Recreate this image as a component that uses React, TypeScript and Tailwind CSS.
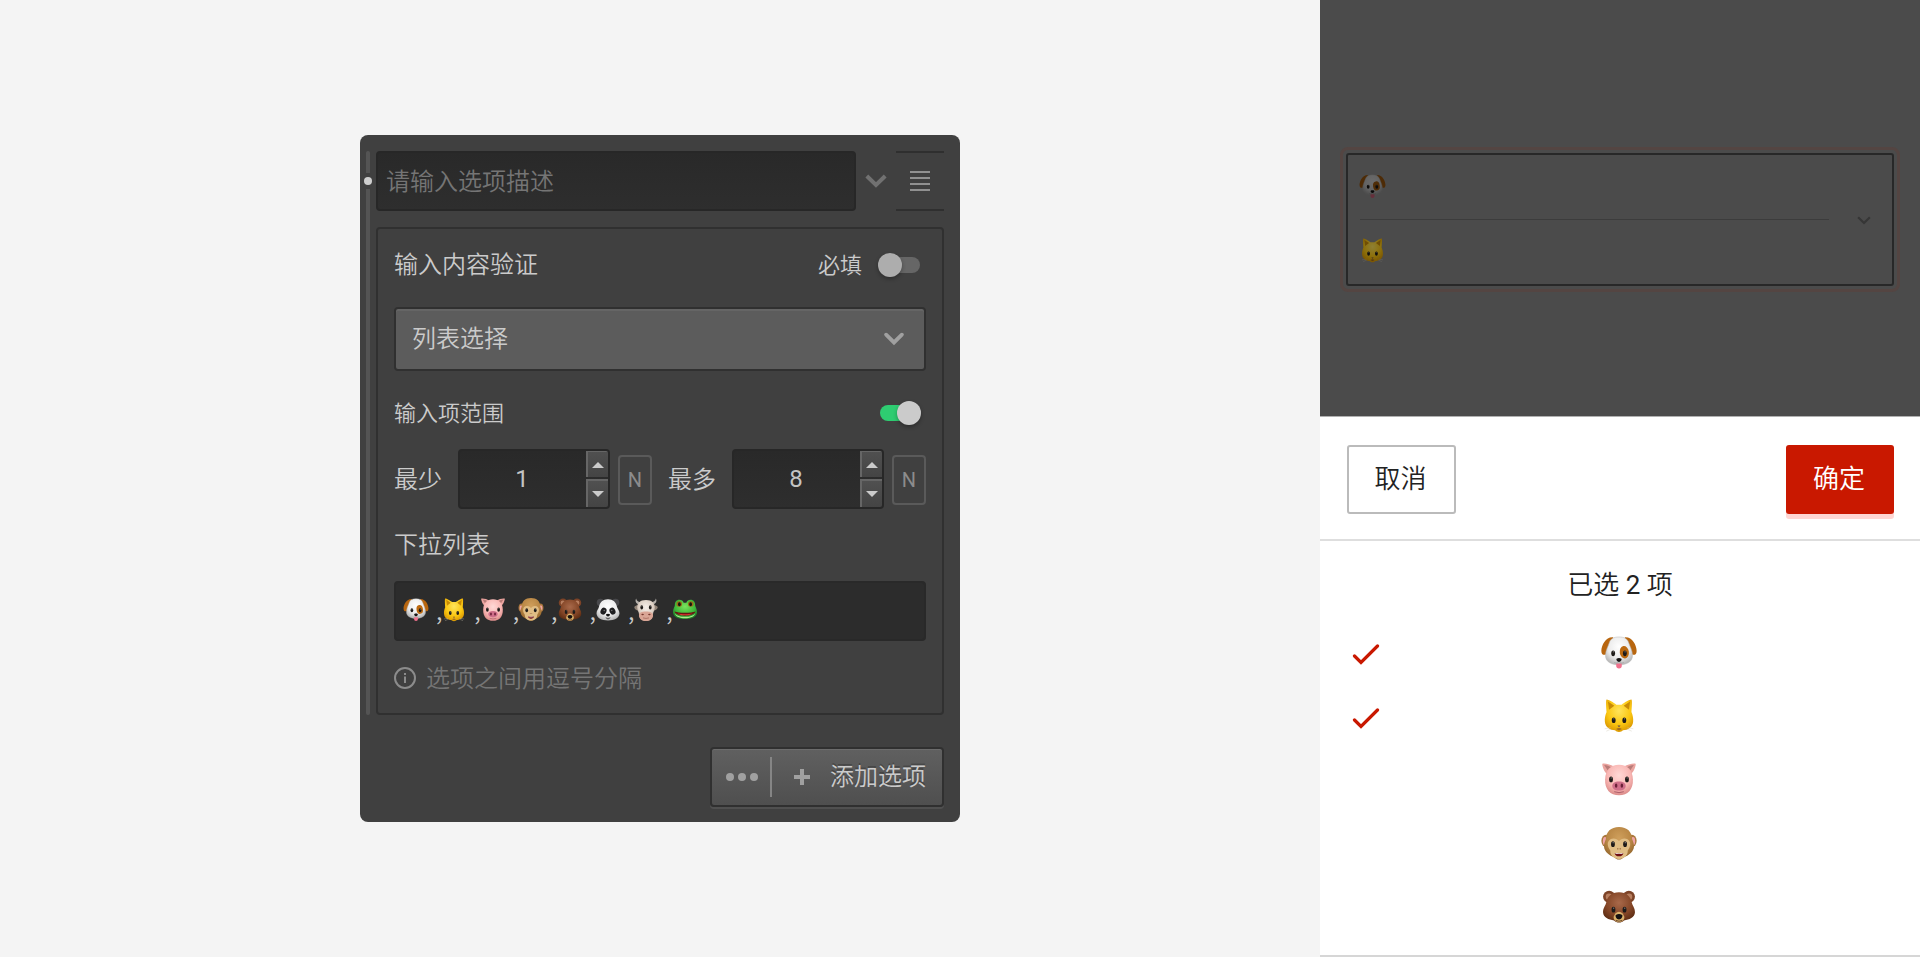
import React from "react";

type Animal = "dog" | "cat" | "pig" | "monkey" | "bear" | "panda" | "cow" | "frog";

const ANIMALS: Animal[] = ["dog", "cat", "pig", "monkey", "bear", "panda", "cow", "frog"];

function Gradients() {
  const stops: [string, string, string, string][] = [
    ["g-white", "#ffffff", "#ebebeb", "#b0b0b0"],
    ["g-yellow", "#ffe45c", "#fbc712", "#d89400"],
    ["g-pink", "#ffd9d6", "#f9b7b4", "#d98886"],
    ["g-tan", "#cf9f5c", "#b98745", "#8b5f28"],
    ["g-brown", "#a8694a", "#844627", "#56280f"],
    ["g-cream", "#f5efe9", "#dccfc4", "#a39184"],
    ["g-green", "#7be35c", "#3fb83a", "#1c7a25"],
  ];
  return (
    <svg className="absolute size-0" aria-hidden="true">
      <defs>
        {stops.map(([id, a, b, c]) => (
          <radialGradient key={id} id={id} cx="0.5" cy="0.35" r="0.68">
            <stop offset="0" stopColor={a} />
            <stop offset="0.6" stopColor={b} />
            <stop offset="1" stopColor={c} />
          </radialGradient>
        ))}
      </defs>
    </svg>
  );
}

function Eyes({ x1 = 11, x2 = 21, y = 16.5 }: { x1?: number; x2?: number; y?: number }) {
  return (
    <g>
      <ellipse cx={x1} cy={y} rx="1.8" ry="2.7" fill="#1d1a18" />
      <ellipse cx={x2} cy={y} rx="1.8" ry="2.7" fill="#1d1a18" />
      <circle cx={x1 + 0.2} cy={y - 1.4} r="0.6" fill="#8a8a8a" />
      <circle cx={x2 + 0.2} cy={y - 1.4} r="0.6" fill="#8a8a8a" />
    </g>
  );
}

const FACES: Record<Animal, React.ReactNode> = {
  dog: (
    <>
      <path d="M10.500 1.200C3.800.6-.6 8.500-.6 14c0 3.300 1.800 4.200 4.200 3.500L10 10zM21.500 1.200C28.200.6 32.600 8.500 32.600 14c0 3.300-1.800 4.200-4.200 3.500L22 10z" fill="#b8660f" />
      <path d="M16 .9c5 0 8 1.700 9.200 5.600 1 3.300 3.500 7.100 3.500 12 0 5.500-5.300 8.700-12.700 8.700S3.300 24 3.300 18.500c0-4.900 2.500-8.700 3.500-12C8 2.600 11 .9 16 .9z" fill="url(#g-white)" stroke="#bdbdbd" strokeWidth=".5" />
      <ellipse cx="21" cy="15.300" rx="4.300" ry="5.900" fill="#bd6a10" transform="rotate(-8 21 15.300)" />
      <Eyes x1={10.500} x2={21.500} y={16.300} />
      <path d="M13.400 25.800h5.200v2.200a2.600 2.600 0 0 1-5.200 0z" fill="#f0708c" />
      <path d="M11.500 25c2.300 1 3.700.4 4.500-1 .8 1.400 2.200 2 4.500 1" fill="none" stroke="#9a9a9a" strokeWidth=".6" />
      <path d="M13.700 21.400c1.500-.8 3.100-.8 4.600 0 .6.900-.8 3-2.300 3s-2.900-2.100-2.300-3z" fill="#171515" />
    </>
  ),
  cat: (
    <>
      <path d="M4.200.6c.7-.7 6.500 2.600 9.300 4.700h5c2.800-2.100 8.600-5.400 9.300-4.700.8.900.1 9.200-.1 11.700 1.200 2.800 1.900 6 1.600 9-.5 5.500-5 7.700-9.600 8.100-1.100.9-1.900 1.600-3.700 1.600s-2.600-.7-3.700-1.600c-4.600-.4-9.100-2.600-9.600-8.100-.3-3 .4-6.200 1.600-9-.2-2.500-.9-10.800-.1-11.700z" fill="url(#g-yellow)" />
      <path d="M5.600 2.400l6 3.900-5 3.900zM26.400 2.400l-6 3.900 5 3.900z" fill="#c88b06" />
      <Eyes x1={11} x2={21} y={20} />
      <path d="M14.500 25h3L16 26.700z" fill="#5f4a4c" />
      <path d="M13.300 28.200q2.700-2 5.400 0L16 29.700z" fill="#a26b20" />
      <path d="M2.500 28l5.500-1M4 30.300l4.500-2M29.500 28l-5.500-1M28 30.300l-4.500-2" stroke="#d3ccb9" strokeWidth=".4" />
    </>
  ),
  pig: (
    <>
      <path d="M.4.800C-.3 1.800 2 9.200 5.100 10.500L12 4C8 .8 1.200 0 .4.800zM31.600.8c.7 1-1.600 8.400-4.700 9.700L20 4c4-3.200 10.800-4 11.600-3.200z" fill="#eba49f" />
      <path d="M2 1.900c2.300.3 5.300 1 7.200 2.600L5.600 7.300zM30 1.900c-2.300.3-5.300 1-7.200 2.600l3.600 2.800z" fill="#b97c78" />
      <path d="M16 1.700c8 0 12.700 5 13.100 13.500.4 9.700-4.900 15.100-13.100 15.100S2.500 24.900 2.900 15.200C3.300 6.700 8 1.700 16 1.700z" fill="url(#g-pink)" />
      <Eyes x1={8.500} x2={23.500} y={15.500} />
      <path d="M16 17.300c4 0 6.600 1.800 6.300 4.500-.2 2.600-2.700 4.100-6.300 4.100s-6.100-1.500-6.300-4.100c-.3-2.700 2.300-4.500 6.300-4.500z" fill="#cf6f8a" />
      <ellipse cx="13.300" cy="21.400" rx="1.200" ry="2" fill="#6b2138" />
      <ellipse cx="18.700" cy="21.400" rx="1.200" ry="2" fill="#6b2138" />
      <path d="M11.500 27q4.500 1.800 9 0" fill="none" stroke="#984a5b" strokeWidth=".7" />
    </>
  ),
  monkey: (
    <>
      <ellipse cx="3.800" cy="13" rx="4.400" ry="5.800" fill="#a9773b" />
      <ellipse cx="28.200" cy="13" rx="4.400" ry="5.800" fill="#a9773b" />
      <ellipse cx="2.800" cy="13.300" rx="2" ry="3.800" fill="#f0a4a6" />
      <ellipse cx="29.200" cy="13.300" rx="2" ry="3.800" fill="#f0a4a6" />
      <path d="M16 0c7.800 0 12.200 4.600 12.400 11.500.9 2.300 1.900 4.600 1.700 7.200-.4 4.900-5 8.300-9.800 10-1.200 1.200-2.500 2-4.300 2s-3.100-.8-4.300-2c-4.800-1.700-9.400-5.100-9.800-10-.2-2.600.8-4.900 1.700-7.200C3.800 4.600 8.200 0 16 0z" fill="url(#g-tan)" />
      <path d="M10.800 10.800c2.400 0 3.800 1.200 5.200 2.400 1.400-1.200 2.800-2.400 5.200-2.400 3.600 0 5.700 2.800 5.300 6.200-.2 2-1.300 3.700-2.300 5.200.3 4.700-3.500 7.800-8.200 7.800s-8.500-3.100-8.200-7.800c-1-1.500-2.100-3.200-2.300-5.200-.4-3.400 1.700-6.200 5.300-6.200z" fill="#e0bd84" />
      <Eyes x1={10.300} x2={21.700} y={16.200} />
      <circle cx="14.900" cy="20.500" r=".6" fill="#7a4622" />
      <circle cx="17.100" cy="20.500" r=".6" fill="#7a4622" />
      <path d="M12 24.400q4 .9 8 0c0 2-1.800 3.200-4 3.200s-4-1.200-4-3.200z" fill="#6e0d13" />
      <path d="M12.600 24.500q3.400.7 6.800 0v.7q-3.400.6-6.800 0z" fill="#fff" />
    </>
  ),
  bear: (
    <>
      <circle cx="6.700" cy="6.300" r="5.700" fill="#7d4327" />
      <circle cx="25.300" cy="6.300" r="5.700" fill="#7d4327" />
      <circle cx="6.500" cy="6.300" r="3" fill="#b87f60" />
      <circle cx="25.500" cy="6.300" r="3" fill="#b87f60" />
      <path d="M16 2c7 0 11.100 4.500 12 9.700.5 2.700 3.300 5.300 3 9.500-.3 4.600-5.300 6.900-10.400 7.400-1.300 1.400-2.600 2-4.600 2s-3.300-.6-4.600-2C6.300 28.100 1.300 25.800 1 21.200c-.3-4.200 2.500-6.800 3-9.500C4.900 6.500 9 2 16 2z" fill="url(#g-brown)" />
      <path d="M16 20.500c2.700 0 3.900 2 5 4.700.6 2.700-2.200 5.100-5 5.100s-5.600-2.400-5-5.100c1.100-2.700 2.300-4.700 5-4.700z" fill="#d9b06a" />
      <Eyes x1={10.800} x2={21.200} y={18.500} />
      <path d="M13 23.600c1.800-1.200 4.200-1.200 6 0 .8 1.200-.8 4.200-3 4.200s-3.800-3-3-4.200z" fill="#141010" />
      <path d="M13 28.600q3 1.600 6 0" fill="none" stroke="#4a2b17" strokeWidth=".7" />
    </>
  ),
  panda: (
    <>
      <circle cx="6" cy="6" r="5" fill="#48484b" />
      <circle cx="26" cy="6" r="5" fill="#48484b" />
      <path d="M16 1.800c6.700 0 11 4 12 10 .4 2.700 3.500 5.300 3.300 9-.4 6-6.700 9.200-15.300 9.200S1.100 26.800.7 20.800c-.2-3.700 2.900-6.300 3.300-9 1-6 5.300-10 12-10z" fill="url(#g-white)" />
      <ellipse cx="10" cy="17.500" rx="3.800" ry="4.800" fill="#1f1f21" transform="rotate(28 10 17.500)" />
      <ellipse cx="22" cy="17.500" rx="3.800" ry="4.800" fill="#1f1f21" transform="rotate(-28 22 17.500)" />
      <circle cx="11" cy="16.500" r="1" fill="#777" />
      <circle cx="21" cy="16.500" r="1" fill="#777" />
      <path d="M13.400 21.700q2.600-1.200 5.200 0c.4 1.200-1.100 2.800-2.600 2.800s-3-1.600-2.600-2.800z" fill="#111" />
      <path d="M13 26.300q3 1.800 6 0l-3 2z" fill="#333" stroke="#333" strokeWidth=".6" />
    </>
  ),
  cow: (
    <>
      <path d="M2.800.5C.6 4.800 3.500 9 9.500 8.800l2-3.600C7 5.800 3.800 4.500 2.800.5zM29.200.5c2.200 4.300-.7 8.500-6.700 8.300l-2-3.600c4.500.6 7.700-.7 8.700-4.700z" fill="#b5b0ab" />
      <path d="M.3 12c2-3 6.200-2.600 9-1.400l-1 6.200C3.800 17 .8 15.600.3 12zM31.700 12c-2-3-6.200-2.600-9-1.400l1 6.200c4.500.2 7.500-1.200 8-4.800z" fill="#918377" />
      <path d="M16 2.500c8.200 0 12 4.700 11.800 10.300-.1 3.900-2.500 5.900-2.600 9.400C24.900 27.400 20.700 30.500 16 30.500s-8.900-3.100-9.200-8.300c-.1-3.500-2.500-5.500-2.600-9.400C4 7.200 7.800 2.500 16 2.500z" fill="url(#g-cream)" />
      <Eyes x1={10.300} x2={21.700} y={12.500} />
      <path d="M16 18c5.800 0 9.600 1.900 9.400 5.400-.2 4.200-3.800 7.400-9.400 7.400s-9.200-3.200-9.400-7.400C6.400 19.900 10.200 18 16 18z" fill="#d9a595" />
      <ellipse cx="11.500" cy="22" rx="1.700" ry="1.100" fill="#77392f" />
      <ellipse cx="20.500" cy="22" rx="1.700" ry="1.100" fill="#77392f" />
      <path d="M12 26.500q4 1.500 8 0" fill="none" stroke="#8b493d" strokeWidth=".7" />
    </>
  ),
  frog: (
    <>
      <path d="M8.500 2.300c3 0 5 1.700 5.700 4h3.600c.7-2.300 2.700-4 5.700-4 3.700 0 6.300 3 6 7-.1 1.500 2.500 5.200 2.500 9.200 0 6.500-6.800 9.500-16 9.500S0 25 0 18.500c0-4 2.600-7.700 2.500-9.200-.3-4 2.300-7 6-7z" fill="url(#g-green)" />
      <circle cx="8.300" cy="8" r="3.700" fill="#9a6a16" />
      <circle cx="23.700" cy="8" r="3.700" fill="#9a6a16" />
      <ellipse cx="8.500" cy="8.200" rx="1.800" ry="2.700" fill="#171311" />
      <ellipse cx="23.500" cy="8.200" rx="1.800" ry="2.700" fill="#171311" />
      <path d="M2.500 20.500c4 6 23 6 27 0-1.500 8.500-25.500 8.500-27 0z" fill="#a9ec8b" />
      <path d="M2 18c5 2.300 23 2.300 28 0-1.700 4.600-8.200 5.500-14 5.500S3.700 22.600 2 18z" fill="#6a1212" />
      <path d="M6 20.800c5 1.200 15 1.200 20 0-2.500 1.900-6.200 2.300-10 2.300s-7.500-.4-10-2.300z" fill="#df3832" />
    </>
  ),
};

function AnimalFace({ name, className }: { name: Animal; className: string }) {
  return (
    <svg viewBox="0 0 32 32" className={className} role="img" aria-label={name} overflow="visible">
      {FACES[name]}
    </svg>
  );
}

function Chevron({ className, width, cap = "butt" }: { className: string; width: number; cap?: "butt" | "round" }) {
  return (
    <svg viewBox="0 0 22 14" className={className} fill="none" stroke="currentColor" strokeWidth={width} strokeLinecap={cap} overflow="visible">
      <path d="M1.800 2 11 11l9.200-9" />
    </svg>
  );
}

function Toggle({ on }: { on: boolean }) {
  return on ? (
    <span className="-mr-px flex h-6 w-[41px] items-center">
      <span className="h-4 w-[29px] rounded-l-full bg-[#2ecc71]" />
      <span className="-ml-3 size-6 rounded-full bg-[#cbcbcb] shadow-[0_2px_4px_rgba(0,0,0,0.3)]" />
    </span>
  ) : (
    <span className="flex h-6 w-[42px] items-center">
      <span className="z-10 size-6 rounded-full bg-[#adadad] shadow-[0_2px_4px_rgba(0,0,0,0.3)]" />
      <span className="-ml-3 h-4 w-[30px] rounded-r-full bg-[#666666]" />
    </span>
  );
}

function Stepper({ value }: { value: number }) {
  return (
    <div className="flex h-[60px] w-[152px] shrink-0 overflow-hidden rounded-[4px] border-2 border-[#272727] bg-linear-to-b from-[#292929] to-[#2e2e2e]">
      <span className="flex flex-1 items-center justify-center pr-0.5 font-['Roboto'] font-normal text-[#c4c4c4]">{value}</span>
      <span className="flex w-[22px] flex-col gap-0.5">
        <span className="flex h-[26px] items-center justify-center border-l-2 border-t border-[#666] bg-linear-to-b from-[#505050] to-[#444]">
          <svg viewBox="0 0 12 6" className="h-1.5 w-3" fill="#cbcbcb"><path d="M0 6 6 0l6 6z" /></svg>
        </span>
        <span className="flex h-7 items-center justify-center border-l-2 border-t-2 border-[#666] bg-linear-to-b from-[#505050] to-[#444]">
          <svg viewBox="0 0 12 6" className="h-1.5 w-3" fill="#cbcbcb"><path d="m0 0 6 6 6-6z" /></svg>
        </span>
      </span>
    </div>
  );
}

function VariableBadge() {
  return (
    <span className="mt-0.5 ml-2 flex h-[50px] w-[34px] shrink-0 items-center justify-center rounded-[4px] border-2 border-[#5a5a5a] font-['Roboto'] text-xl font-normal text-[#8c8c8c]">
      N
    </span>
  );
}

function OptionEditor() {
  return (
    <section className="flex h-[687px] w-[600px] flex-col rounded-lg bg-[#404040] pt-4 pr-4 pl-1.5 text-2xl leading-none text-[#cbcbcb]">
      <div className="flex">
        <div className="-ml-0.5 mr-1 flex h-[564px] w-2 flex-col items-center">
          <span className="h-[22px] w-1 rounded-t-full bg-[#545454]" />
          <span className="my-1 size-2 rounded-full bg-[#cfcfcf]" />
          <span className="w-1 flex-1 rounded-b-full bg-[#545454]" />
        </div>
        <div className="flex flex-1 flex-col">
          <div className="flex h-[60px]">
            <div className="flex w-[480px] items-center rounded-[4px] border-2 border-[#272727] bg-linear-to-b from-[#292929] to-[#2e2e2e] pb-0.5 pl-2 text-[#757575]">
              请输入选项描述
            </div>
            <div className="flex w-10 items-center justify-center">
              <Chevron className="h-3.5 w-[22px] text-[#717171]" width={4} />
            </div>
            <div className="flex w-12 flex-col items-center justify-center gap-1 border-y-2 border-[#2f2f2f]">
              <span className="h-0.5 w-5 bg-[#919191]" />
              <span className="h-0.5 w-5 bg-[#919191]" />
              <span className="h-0.5 w-5 bg-[#919191]" />
              <span className="h-0.5 w-5 bg-[#919191]" />
            </div>
          </div>

          <div className="mt-4 flex h-[488px] flex-col rounded-[4px] border-2 border-[#303030] px-4 pt-6">
            <div className="flex h-6 items-center justify-between">
              <span className="pb-1">输入内容验证</span>
              <span className="flex items-center pr-1.5">
                <span className="mr-4 pb-1 text-[22px]">必填</span>
                <Toggle on={false} />
              </span>
            </div>

            <div className="mt-[30px] flex h-16 items-center justify-between rounded-[4px] border-2 border-[#303030] bg-[#5c5c5c] pr-5 pl-4 shadow-[inset_0_2px_0_#656565]">
              <span className="pb-1">列表选择</span>
              <Chevron className="h-3 w-5 text-[#a0a0a0]" width={4.500} cap="round" />
            </div>

            <div className="mt-[30px] flex h-6 items-center justify-between pr-1.5">
              <span className="pb-1 text-[22px]">输入项范围</span>
              <Toggle on />
            </div>

            <div className="mt-6 flex h-[60px] items-center">
              <span className="w-16 shrink-0 pb-0.5">最少</span>
              <Stepper value={1} />
              <VariableBadge />
              <span className="ml-4 w-16 shrink-0 pb-0.5">最多</span>
              <Stepper value={8} />
              <VariableBadge />
            </div>

            <div className="mt-[22px] flex h-6 items-center">下拉列表</div>

            <div className="mt-[26px] flex h-[60px] items-center rounded-[4px] border-2 border-[#292929] bg-[#2c2c2c] pb-0.5 pl-2">
              {ANIMALS.map((name, i) => (
                <span key={name} className="flex w-[38.4px] items-center justify-between">
                  <AnimalFace name={name} className="size-6" />
                  {i < ANIMALS.length - 1 && <span>,</span>}
                </span>
              ))}
            </div>

            <div className="mt-[25px] flex h-6 items-center text-[#757575]">
              <svg viewBox="0 0 22 22" className="mr-2.5 size-[22px]" fill="none" stroke="#8c8c8c" strokeWidth="2">
                <circle cx="11" cy="11" r="10" />
                <path d="M11 9.500v6.500" />
                <path d="M11 6v2" />
              </svg>
              <span className="pb-0.5">选项之间用逗号分隔</span>
            </div>
          </div>
        </div>
      </div>

      <div className="mt-8 ml-auto flex h-[60px] w-[234px] items-center rounded-[4px] border-2 border-[#303030] bg-linear-to-b from-[#606060] to-[#4f4f4f] pl-3.5 shadow-[0_2px_0_#505050,inset_0_1px_0_#6c6c6c]">
        <span className="flex gap-1">
          <span className="size-2 rounded-full bg-[#a0a0a0]" />
          <span className="size-2 rounded-full bg-[#a0a0a0]" />
          <span className="size-2 rounded-full bg-[#a0a0a0]" />
        </span>
        <span className="ml-3 h-10 w-0.5 bg-[#858585]" />
        <svg viewBox="0 0 16 16" className="ml-[22px] size-4" stroke="#a0a0a0" strokeWidth="4">
          <path d="M8 0v16M0 8h16" />
        </svg>
        <span className="ml-5 pb-1 [text-shadow:0_-2px_0_rgba(0,0,0,0.22)]">添加选项</span>
      </div>
    </section>
  );
}

function Picker() {
  const rows: { name: Animal; picked: boolean }[] = ANIMALS.slice(0, 5).map((name, i) => ({ name, picked: i < 2 }));
  return (
    <aside className="flex w-[600px] shrink-0 flex-col bg-white font-['Roboto','Noto_Sans_CJK_SC',sans-serif] text-[26px] leading-none font-normal text-[#222]">
      <div className="h-[416px] bg-[#4b4b4b] px-5 pt-[147px]">
        <div className="h-[145px] rounded-[8px] border-[3px] border-[#544542] p-[3px]">
          <div className="flex h-[133px] items-center rounded-[3px] border-2 border-[#282828] pr-[21px] pl-3">
            <div className="w-[469px]">
              <div className="flex h-[65px] items-center border-b border-[#3c3c3c] pb-0.5">
                <AnimalFace name="dog" className="size-[25px] brightness-[0.42]" />
              </div>
              <div className="flex h-16 items-center pb-1">
                <AnimalFace name="cat" className="size-[25px] brightness-[0.56]" />
              </div>
            </div>
            <Chevron className="mt-0.5 ml-auto h-[9px] w-3.5 text-[#363636]" width={3.500} />
          </div>
        </div>
      </div>

      <div className="flex h-[125px] items-start justify-between border-t border-b-2 border-t-[#b0b0b0] border-b-[#dedede] px-[26px] pt-7">
        <button className="ml-px flex h-[69px] w-[109px] items-center justify-center rounded-[3px] border-2 border-[#bbb] pr-0.5 pb-0.5 font-[350]">取消</button>
        <button className="flex h-[69px] w-[108px] items-center justify-center rounded-[3px] bg-[#c91800] pr-0.5 pb-0.5 font-[350] text-white shadow-[0_5px_0_#ffd6d3]">确定</button>
      </div>

      <div className="flex flex-1 flex-col border-b-2 border-[#d6d6d6] pt-[31px]">
        <div className="h-[49px] text-center font-[350]">
          已选 <span className="font-normal">2</span> 项
        </div>
        {rows.map(({ name, picked }) => (
          <div key={name} className="flex h-[63.6px] items-center justify-between pr-0.5 pl-8">
            <span className="w-8">
              {picked && (
                <svg viewBox="0 0 28 22" className="mt-[5px] h-[22px] w-7" fill="none" stroke="#c91800" strokeWidth="3.200" strokeLinecap="round">
                  <path d="m2.500 12 6.500 6.500L25.500 2" />
                </svg>
              )}
            </span>
            <AnimalFace name={name} className="size-[34px]" />
            <span className="w-16" />
          </div>
        ))}
      </div>
    </aside>
  );
}

export default function App() {
  return (
    <main className="flex h-[957px] w-[1920px] overflow-hidden bg-[#f4f4f4] font-['Noto_Sans_CJK_SC','Noto_Sans',sans-serif] font-[350]">
      <Gradients />
      <div className="flex flex-1 items-start justify-center pt-[135px]">
        <OptionEditor />
      </div>
      <Picker />
    </main>
  );
}
